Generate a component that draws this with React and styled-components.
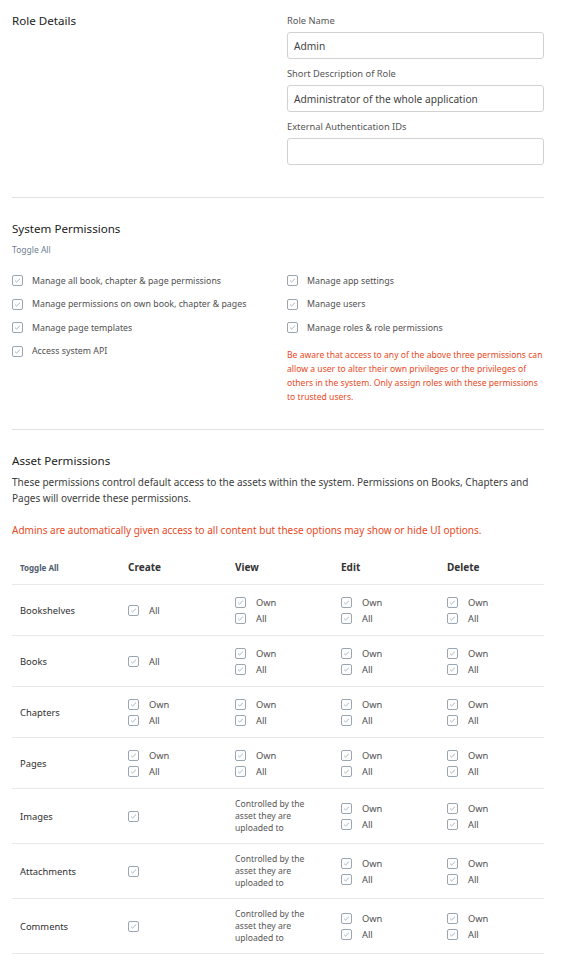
import React from 'react';
import styled, { createGlobalStyle } from 'styled-components';

const Global = createGlobalStyle`
  body {
    margin: 0;
    background: #fff;
    font-family: "Noto Sans", "Open Sans", sans-serif;
    color: #444;
  }
`;

const Page = styled.div`
  width: 532px;
  padding: 0 18px 0 12px;
`;

const Section = styled.section`
  padding: ${p => p.$pad};
  border-bottom: ${p => (p.$last ? 'none' : '1px solid #e2e2e2')};
`;

const TwoCol = styled.div`
  display: grid;
  grid-template-columns: 275px 257px;
`;

const Heading = styled.h2`
  margin: 0;
  font-size: 11.6px;
  font-weight: 400;
  color: #222;
  line-height: 12px;
`;

const Field = styled.div`
  margin-bottom: 9px;
  &:last-child { margin-bottom: 0; }
`;

const Label = styled.label`
  display: block;
  font-size: 9.3px;
  color: #555;
  line-height: 12px;
  margin: 0 0 5px;
`;

const Input = styled.div`
  height: 25px;
  border: 1px solid #d2d2d2;
  border-radius: 3px;
  font-size: 10.2px;
  color: #444;
  padding: 0 6px;
  display: flex;
  align-items: center;
`;

const ToggleAll = styled.div`
  font-size: 8.5px;
  line-height: 12px;
  color: #6b7f91;
  margin: 9px 0 13px;
`;

const CheckList = styled.div`
  display: flex;
  flex-direction: column;
`;

const CheckRow = styled.div`
  display: flex;
  align-items: center;
  gap: ${p => p.$gap || '9px'};
  height: ${p => p.$h || '23.5px'};
  font-size: ${p => p.$fs || '8.8px'};
  color: #4f4f4f;
  white-space: nowrap;
`;

const Warn = styled.p`
  margin: 8px 0 0;
  font-size: 8.6px;
  line-height: 14px;
  color: #e8491d;
`;

const Desc = styled.p`
  margin: 7px 0 0;
  font-size: 10px;
  line-height: 16px;
  color: #3d3d3d;
`;

const WarnLine = styled.p`
  margin: 16px 0 0;
  font-size: 10px;
  line-height: 16px;
  color: #e8491d;
`;

const Table = styled.table`
  width: 532px;
  border-collapse: collapse;
  table-layout: fixed;
  margin-top: 13px;
`;

const Col = styled.col`
  width: ${p => p.$w}px;
`;

const HeadRow = styled.tr`
  height: 34px;
  border-bottom: 1px solid #e8e8e8;
`;

const Th = styled.th`
  text-align: left;
  padding: 0 8px;
  vertical-align: middle;
  font-size: ${p => (p.$small ? '8px' : '10px')};
  font-weight: 700;
  color: ${p => (p.$small ? '#4d5d6e' : '#333')};
`;

const Tr = styled.tr`
  height: ${p => p.$h}px;
  border-bottom: 1px solid #e8e8e8;
`;

const Td = styled.td`
  padding: 0 8px;
  vertical-align: middle;
  font-size: 9.4px;
  color: #2f2f2f;
`;

const Note = styled.div`
  font-size: 8.6px;
  line-height: 12px;
  color: #555;
  white-space: nowrap;
`;

const BoxSvg = styled.svg`
  flex: none;
  display: block;
`;

function Box() {
  return (
    <BoxSvg width="11" height="11" viewBox="0 0 11 11">
      <rect x="0.5" y="0.5" width="10" height="10" rx="1.5" fill="#fff" stroke="#9aa6b2" />
      <path d="M3.1 5.7 L4.6 7 L7.9 3.8" fill="none" stroke="#a9b2bb" strokeWidth="1" />
    </BoxSvg>
  );
}

function Check({ label, ...rest }) {
  return (
    <CheckRow {...rest}>
      <Box />
      {label && <span>{label}</span>}
    </CheckRow>
  );
}

function Cell({ opts }) {
  if (opts === 'note') {
    return <Note>Controlled by the<br />asset they are<br />uploaded to</Note>;
  }
  return (
    <CheckList>
      {opts.map(o => (
        <Check key={o} label={o} $h="16px" $gap="10px" $fs="9.3px" />
      ))}
    </CheckList>
  );
}

const own = ['Own', 'All'];
const rows = [
  { name: 'Bookshelves', h: 51, c: ['All'], v: own },
  { name: 'Books', h: 51, c: ['All'], v: own },
  { name: 'Chapters', h: 51, c: own, v: own },
  { name: 'Pages', h: 51, c: own, v: own },
  { name: 'Images', h: 55, c: [''], v: 'note' },
  { name: 'Attachments', h: 55, c: [''], v: 'note' },
  { name: 'Comments', h: 55, c: [''], v: 'note' },
];

export default function App() {
  return (
    <Page>
      <Global />
      <Section $pad="15px 0 32px">
        <TwoCol>
          <Heading>Role Details</Heading>
          <div>
            <Field>
              <Label>Role Name</Label>
              <Input>Admin</Input>
            </Field>
            <Field>
              <Label>Short Description of Role</Label>
              <Input>Administrator of the whole application</Input>
            </Field>
            <Field>
              <Label>External Authentication IDs</Label>
              <Input />
            </Field>
          </div>
        </TwoCol>
      </Section>

      <Section $pad="25px 0 25px">
        <Heading>System Permissions</Heading>
        <ToggleAll>Toggle All</ToggleAll>
        <TwoCol>
          <CheckList>
            <Check label="Manage all book, chapter & page permissions" />
            <Check label="Manage permissions on own book, chapter & pages" />
            <Check label="Manage page templates" />
            <Check label="Access system API" />
          </CheckList>
          <CheckList>
            <Check label="Manage app settings" />
            <Check label="Manage users" />
            <Check label="Manage roles & role permissions" />
            <Warn>
              Be aware that access to any of the above three permissions can allow a user to alter
              their own privileges or the privileges of others in the system. Only assign roles
              with these permissions to trusted users.
            </Warn>
          </CheckList>
        </TwoCol>
      </Section>

      <Section $pad="25px 0 0" $last>
        <Heading>Asset Permissions</Heading>
        <Desc>
          These permissions control default access to the assets within the system. Permissions
          on Books, Chapters and Pages will override these permissions.
        </Desc>
        <WarnLine>
          Admins are automatically given access to all content but these options may show or hide
          UI options.
        </WarnLine>
        <Table>
          <colgroup>
            <Col $w={108} />
            <Col $w={107} />
            <Col $w={106} />
            <Col $w={106} />
            <Col $w={105} />
          </colgroup>
          <thead>
            <HeadRow>
              <Th $small>Toggle All</Th>
              <Th>Create</Th>
              <Th>View</Th>
              <Th>Edit</Th>
              <Th>Delete</Th>
            </HeadRow>
          </thead>
          <tbody>
            {rows.map(r => (
              <Tr key={r.name} $h={r.h}>
                <Td>{r.name}</Td>
                <Td><Cell opts={r.c} /></Td>
                <Td><Cell opts={r.v} /></Td>
                <Td><Cell opts={own} /></Td>
                <Td><Cell opts={own} /></Td>
              </Tr>
            ))}
          </tbody>
        </Table>
      </Section>
    </Page>
  );
}
